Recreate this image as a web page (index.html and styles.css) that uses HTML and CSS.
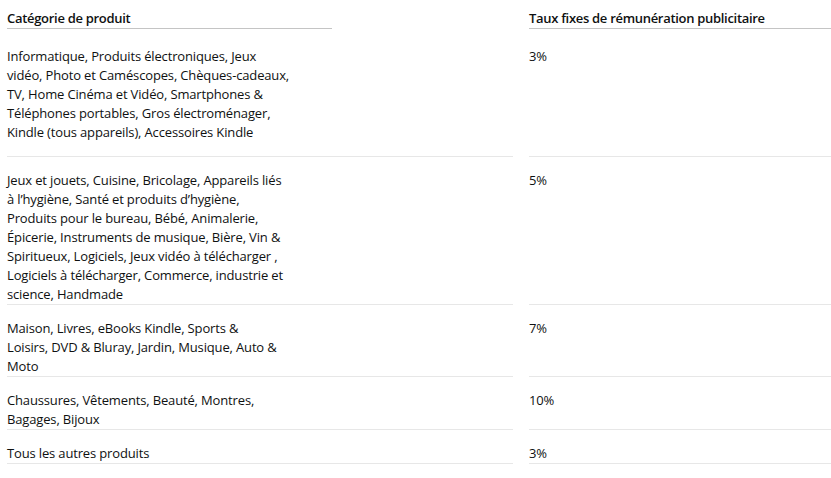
FILE: index.html
```html
<!DOCTYPE html>
<html lang="fr">
<head>
<meta charset="utf-8">
<link rel="stylesheet" href="styles.css">
</head>
<body>
<div class="rates">
  <div class="row head">
    <div class="cell"><span class="head-label">Catégorie de produit</span></div>
    <div class="cell"><span class="head-label full">Taux fixes de rémunération publicitaire</span></div>
  </div>
  <div class="row first">
    <div class="cell"><p class="text">Informatique, Produits électroniques, Jeux<br>vidéo, Photo et Caméscopes, Chèques-cadeaux,<br>TV, Home Cinéma et Vidéo, Smartphones &amp;<br>Téléphones portables, Gros électroménager,<br>Kindle (tous appareils), Accessoires Kindle</p></div>
    <div class="cell"><p class="text">3%</p></div>
  </div>
  <div class="row">
    <div class="cell"><p class="text">Jeux et jouets, Cuisine, Bricolage, Appareils liés<br>à l’hygiène, Santé et produits d’hygiène,<br>Produits pour le bureau, Bébé, Animalerie,<br>Épicerie, Instruments de musique, Bière, Vin &amp;<br>Spiritueux, Logiciels, Jeux vidéo à télécharger ,<br>Logiciels à télécharger, Commerce, industrie et<br>science, Handmade</p></div>
    <div class="cell"><p class="text">5%</p></div>
  </div>
  <div class="row">
    <div class="cell"><p class="text">Maison, Livres, eBooks Kindle, Sports &amp;<br>Loisirs, DVD &amp; Bluray, Jardin, Musique, Auto &amp;<br>Moto</p></div>
    <div class="cell"><p class="text">7%</p></div>
  </div>
  <div class="row">
    <div class="cell"><p class="text">Chaussures, Vêtements, Beauté, Montres,<br>Bagages, Bijoux</p></div>
    <div class="cell"><p class="text">10%</p></div>
  </div>
  <div class="row">
    <div class="cell"><p class="text">Tous les autres produits</p></div>
    <div class="cell"><p class="text">3%</p></div>
  </div>
</div>
</body>
</html>
```
FILE: styles.css
```css
html, body {
  margin: 0;
  padding: 0;
  background: #ffffff;
}
body {
  font-family: "Open Sans", "Noto Sans", sans-serif;
  font-size: 13px;
  line-height: 19px;
  letter-spacing: -0.15px;
  color: #0f1111;
}
.rates {
  padding: 9px 0 0 7px;
}
.row {
  display: grid;
  grid-template-columns: 506px 302px;
  column-gap: 16px;
}
.row .cell {
  border-bottom: 1px solid #e7e7e7;
  padding-top: 14px;
}
.row.first .cell {
  padding-top: 18px;
  padding-bottom: 14px;
}
.row.head .cell {
  border-bottom: none;
  padding: 0;
}
.head-label {
  display: block;
  width: 325px;
  font-weight: 600;
  letter-spacing: -0.3px;
  border-bottom: 1px solid #c4c4c4;
}
.head-label.full {
  width: auto;
}
.text {
  margin: 0;
  width: 320px;
}
```
